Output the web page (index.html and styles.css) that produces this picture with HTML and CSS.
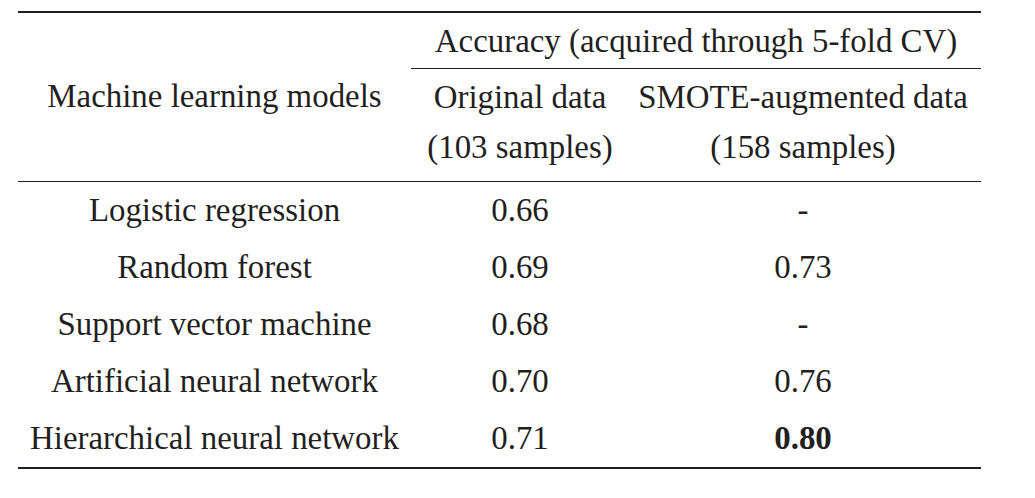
FILE: index.html
```html
<!DOCTYPE html>
<html lang="en">
<head>
<meta charset="utf-8">
<title>Accuracy table</title>
<link rel="stylesheet" href="styles.css">
</head>
<body>
<table class="results">
  <colgroup>
    <col class="col-model">
    <col class="col-orig">
    <col class="col-smote">
  </colgroup>
  <thead>
    <tr>
      <th class="models" rowspan="3">Machine learning models</th>
      <th class="group" colspan="2">Accuracy (acquired through 5-fold CV)</th>
    </tr>
    <tr>
      <th class="sub">Original data</th>
      <th class="sub smote">SMOTE-augmented data</th>
    </tr>
    <tr>
      <th class="count">(103 samples)</th>
      <th class="count smote">(158 samples)</th>
    </tr>
  </thead>
  <tbody>
    <tr><td>Logistic regression</td><td>0.66</td><td class="smote">-</td></tr>
    <tr><td>Random forest</td><td>0.69</td><td class="smote">0.73</td></tr>
    <tr><td>Support vector machine</td><td>0.68</td><td class="smote">-</td></tr>
    <tr><td>Artificial neural network</td><td>0.70</td><td class="smote">0.76</td></tr>
    <tr><td>Hierarchical neural network</td><td>0.71</td><td class="smote best">0.80</td></tr>
  </tbody>
</table>
</body>
</html>
```
FILE: styles.css
```css
html, body {
  margin: 0;
  padding: 0;
  background: #ffffff;
}

body {
  padding: 11px 0 0 18px;
  font-family: "Liberation Serif", "Times New Roman", serif;
  font-size: 32.9px;
  color: #231f20;
}

.results {
  border-collapse: separate;
  border-spacing: 0;
  table-layout: fixed;
  width: 963px;
  border-top: 2px solid #231f20;
  border-bottom: 2px solid #231f20;
}

.col-model { width: 393px; }
.col-orig { width: 218px; }
.col-smote { width: 352px; }

.results th,
.results td {
  font-weight: normal;
  text-align: center;
  line-height: 36px;
  padding: 0;
  white-space: nowrap;
}

.results .models {
  vertical-align: middle;
  padding-bottom: 2px;
  border-bottom: 1px solid #231f20;
}

.results .group {
  padding: 10px 0 9px;
  border-bottom: 1px solid #231f20;
}

.results .sub {
  padding: 10px 0 7px;
}

.results .count {
  padding: 7px 0 16px;
  border-bottom: 1px solid #231f20;
}

.results td {
  padding: 10px 0 11px;
}

.results .smote {
  padding-right: 4px;
}

.results .best {
  font-weight: bold;
}
```
